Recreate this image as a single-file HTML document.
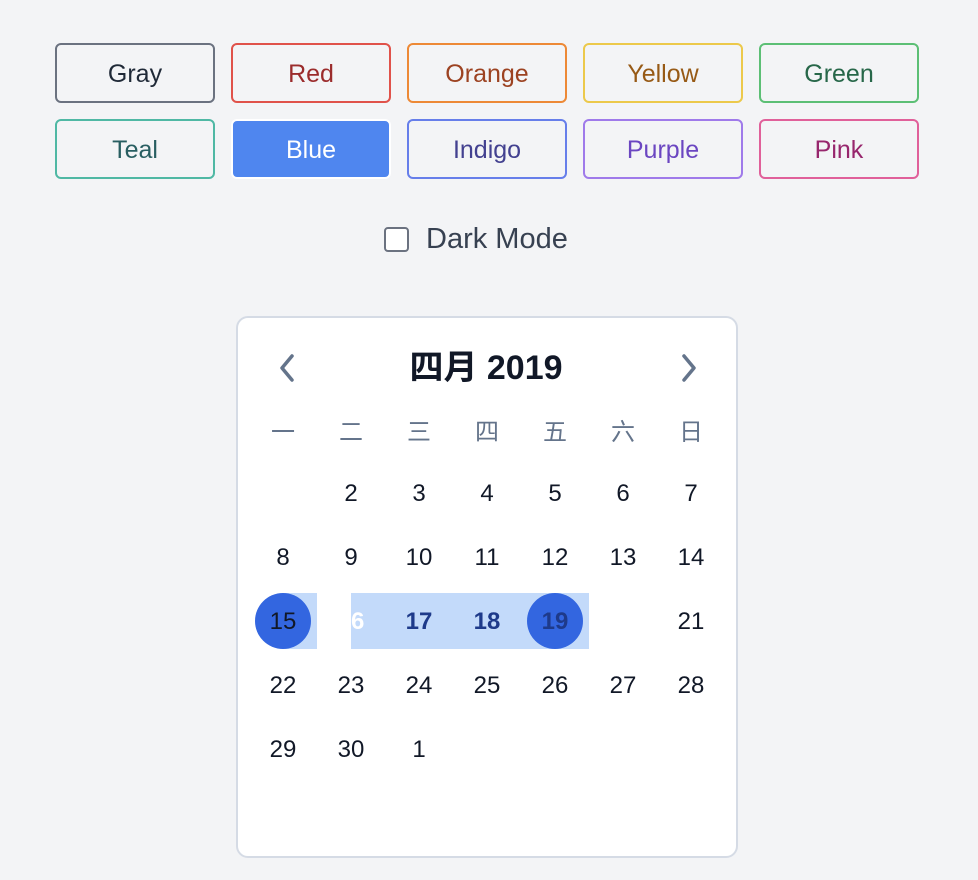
<!DOCTYPE html>
<html><head><meta charset="utf-8"><style>
body{margin:0;width:978px;height:880px;background:#f3f4f6;font-family:"Liberation Sans","Noto Sans CJK SC",sans-serif;position:relative;overflow:hidden}
.b{position:absolute;width:160px;height:60px;border:2px solid;border-radius:6px;box-sizing:border-box;text-align:center;line-height:57px;font-size:25px;padding-top:1px}
.c{position:absolute;font-size:24px;color:#111827;width:68px;text-align:center;line-height:30px;margin-top:1px}
.w{color:#64748b;font-size:24px}
</style></head><body>
<div class="b" style="left:55px;top:43px;border-color:#6b7280;color:#1f2937">Gray</div>
<div class="b" style="left:231px;top:43px;border-color:#e0524a;color:#9b2c2c">Red</div>
<div class="b" style="left:407px;top:43px;border-color:#ed8936;color:#9c4221">Orange</div>
<div class="b" style="left:583px;top:43px;border-color:#ecc94b;color:#975a16">Yellow</div>
<div class="b" style="left:759px;top:43px;border-color:#5cbf75;color:#276749">Green</div>
<div class="b" style="left:55px;top:119px;border-color:#4fb8a4;color:#285e61">Teal</div>
<div class="b" style="left:231px;top:119px;border-color:#fff;background:#4f86ef;color:#fff">Blue</div>
<div class="b" style="left:407px;top:119px;border-color:#667eea;color:#434190">Indigo</div>
<div class="b" style="left:583px;top:119px;border-color:#9f7aea;color:#6b46c1">Purple</div>
<div class="b" style="left:759px;top:119px;border-color:#e0609a;color:#97266d">Pink</div>
<div style="position:absolute;left:384px;top:227px;width:25px;height:25px;border:2px solid #6b7280;border-radius:4px;background:#fff;box-sizing:border-box"></div>
<div style="position:absolute;left:426px;top:222px;font-size:29px;color:#374151;line-height:34px">Dark Mode</div>
<div style="position:absolute;left:236px;top:316px;width:502px;height:542px;background:#fff;border:2px solid #d5dbe5;border-radius:12px;box-sizing:border-box"></div>
<svg style="position:absolute;left:272px;top:352px" width="30" height="32"><path d="M20 4 L10 16 L20 28" stroke="#64748b" stroke-width="3.5" fill="none" stroke-linecap="round" stroke-linejoin="round"/></svg>
<svg style="position:absolute;left:674px;top:352px" width="30" height="32"><path d="M10 4 L20 16 L10 28" stroke="#64748b" stroke-width="3.5" fill="none" stroke-linecap="round" stroke-linejoin="round"/></svg>
<div style="position:absolute;left:336px;top:348px;width:300px;text-align:center;font-size:34px;font-weight:bold;color:#111827;line-height:40px">四月 2019</div>
<div style="position:absolute;left:283px;top:593px;width:34px;height:56px;background:#c3dafa"></div>
<div style="position:absolute;left:351px;top:593px;width:238px;height:56px;background:#c3dafa"></div>
<div style="position:absolute;left:255px;top:593px;width:56px;height:56px;border-radius:50%;background:#3366e0"></div>
<div style="position:absolute;left:527px;top:593px;width:56px;height:56px;border-radius:50%;background:#3366e0"></div>
<div class="c w" style="left:249px;top:417px">一</div><div class="c w" style="left:317px;top:417px">二</div><div class="c w" style="left:385px;top:417px">三</div><div class="c w" style="left:453px;top:417px">四</div><div class="c w" style="left:521px;top:417px">五</div><div class="c w" style="left:589px;top:417px">六</div><div class="c w" style="left:657px;top:417px">日</div>
<div class="c" style="left:317px;top:478px">2</div><div class="c" style="left:385px;top:478px">3</div><div class="c" style="left:453px;top:478px">4</div><div class="c" style="left:521px;top:478px">5</div><div class="c" style="left:589px;top:478px">6</div><div class="c" style="left:657px;top:478px">7</div>
<div class="c" style="left:249px;top:542px">8</div><div class="c" style="left:317px;top:542px">9</div><div class="c" style="left:385px;top:542px">10</div><div class="c" style="left:453px;top:542px">11</div><div class="c" style="left:521px;top:542px">12</div><div class="c" style="left:589px;top:542px">13</div><div class="c" style="left:657px;top:542px">14</div>
<div class="c" style="left:249px;top:606px;color:#111827">15</div><div class="c" style="left:317px;top:606px;color:#fff;font-weight:bold;clip-path:inset(0 0 0 34px)">16</div><div class="c" style="left:385px;top:606px;color:#1e3a8a;font-weight:bold">17</div><div class="c" style="left:453px;top:606px;color:#1e3a8a;font-weight:bold">18</div><div class="c" style="left:521px;top:606px;color:#1e3a8a;font-weight:bold">19</div><div class="c" style="left:657px;top:606px">21</div>
<div class="c" style="left:249px;top:670px">22</div><div class="c" style="left:317px;top:670px">23</div><div class="c" style="left:385px;top:670px">24</div><div class="c" style="left:453px;top:670px">25</div><div class="c" style="left:521px;top:670px">26</div><div class="c" style="left:589px;top:670px">27</div><div class="c" style="left:657px;top:670px">28</div>
<div class="c" style="left:249px;top:734px">29</div><div class="c" style="left:317px;top:734px">30</div><div class="c" style="left:385px;top:734px">1</div>
</body></html>
